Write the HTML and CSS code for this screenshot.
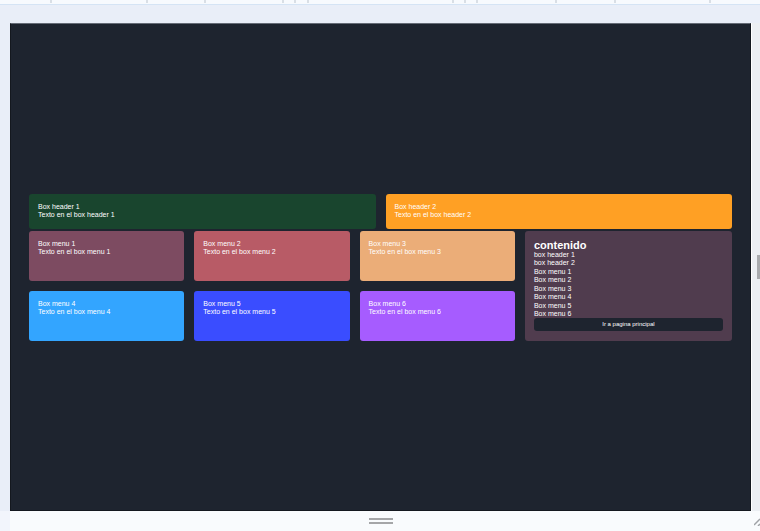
FILE: index.html
```html
<!DOCTYPE html>
<html lang="es">
<head>
<meta charset="utf-8">
<meta name="viewport" content="width=device-width, initial-scale=1">
<title>Box layout</title>
<link rel="stylesheet" href="styles.css">
</head>
<body>
<div class="toolbar"><i></i><i></i><i></i><i></i><i></i><i></i><i></i><i></i><i></i><i></i><i></i><i></i></div>
<div class="stage">
  <main class="viewport">
    <header class="headers">
      <section class="box green"><p>Box header 1</p><p>Texto en el box header 1</p></section>
      <section class="box orange"><p>Box header 2</p><p>Texto en el box header 2</p></section>
    </header>
    <div class="menus">
      <section class="box plum"><p>Box menu 1</p><p>Texto en el box menu 1</p></section>
      <section class="box rose"><p>Box menu 2</p><p>Texto en el box menu 2</p></section>
      <section class="box sand"><p>Box menu 3</p><p>Texto en el box menu 3</p></section>
      <aside class="box content">
        <h1>contenido</h1>
        <ul>
          <li>box header 1</li>
          <li>box header 2</li>
          <li>Box menu 1</li>
          <li>Box menu 2</li>
          <li>Box menu 3</li>
          <li>Box menu 4</li>
          <li>Box menu 5</li>
          <li>Box menu 6</li>
        </ul>
        <button type="button">Ir a pagina principal</button>
      </aside>
      <section class="box sky"><p>Box menu 4</p><p>Texto en el box menu 4</p></section>
      <section class="box blue"><p>Box menu 5</p><p>Texto en el box menu 5</p></section>
      <section class="box violet"><p>Box menu 6</p><p>Texto en el box menu 6</p></section>
    </div>
  </main>
  <div class="side"><span class="grip-side"></span></div>
</div>
<footer class="bottom">
  <span class="grip"></span>
  <svg class="corner" width="6" height="8" viewBox="0 0 6 8" aria-hidden="true"><path d="M0 7L6 1M4 8L6 6" fill="none" stroke="#a0a3a7" stroke-width="1.5"/></svg>
</footer>
</body>
</html>
```
FILE: styles.css
```css
* {
  box-sizing: border-box;
  margin: 0;
  padding: 0;
}

body {
  display: flex;
  flex-direction: column;
  min-height: 100vh;
  background: #e9eef8;
  color: #fff;
  font: 7px/8px "Liberation Sans", Arial, sans-serif;
}

.toolbar {
  display: grid;
  grid-template-columns: 52fr 96fr 58fr 78fr 12fr 13fr 145fr 12fr 12fr 79fr 59fr 95fr 49fr;
  height: 5px;
  padding-bottom: 1px;
  background: #f7fafe;
  border-bottom: 1px solid #d5e4f5;
}

.toolbar i {
  border-right: 2px solid #d9dfe6;
}

.stage {
  display: flex;
  flex: 1;
  padding: 18px 0 0 10px;
}

.viewport {
  display: flex;
  flex: 1;
  flex-direction: column;
  justify-content: center;
  gap: 2px;
  padding: 1px 18px 0;
  background: #1e242f;
  border: 1px solid #14181f;
  border-top-color: #656b76;
}

.headers {
  display: grid;
  grid-template-columns: 1fr 1fr;
  gap: 10px;
}

.menus {
  display: grid;
  grid-template-columns: 3fr 3fr 3fr 4fr;
  grid-auto-rows: minmax(50px, 1fr);
  gap: 10px;
}

.box {
  min-height: 35px;
  padding: 9px;
  border-radius: 3px;
}

.green { background: #19452e; }
.orange { background: #ffa024; }
.plum { background: #7d4b61; }
.rose { background: #b85b66; }
.sand { background: #ebad78; }
.sky { background: #33a5ff; }
.blue { background: #3a4dff; }
.violet { background: #a65cff; }

.content {
  display: flex;
  grid-column: 4;
  grid-row: 1 / span 2;
  flex-direction: column;
  padding: 8px 9px 10px;
  background: #503c4e;
}

.content h1 {
  font-size: 11px;
  line-height: 12px;
}

.content ul {
  display: flex;
  flex: 1;
  flex-direction: column;
  justify-content: space-between;
  list-style: none;
}

.content button {
  height: 13px;
  background: #1e242f;
  border: 0;
  border-radius: 3px;
  color: #fff;
  font: 6px/13px "Liberation Sans", Arial, sans-serif;
}

.side {
  display: flex;
  align-items: center;
  justify-content: flex-end;
  width: 9px;
  background: #eceff3;
  border-left: 1px solid #fff;
}

.grip-side {
  width: 3px;
  height: 24px;
  background: #a9abae;
}

.bottom {
  position: relative;
  display: flex;
  justify-content: center;
  height: 20px;
  padding-top: 7px;
  background: #f9fbfd;
  border-left: 10px solid #f2f5fc;
}

.grip {
  width: 24px;
  height: 6px;
  margin-right: 8px;
  border: solid #a5a6a8;
  border-width: 2px 0;
}

.corner {
  position: absolute;
  right: 0;
  bottom: 5px;
}
```
